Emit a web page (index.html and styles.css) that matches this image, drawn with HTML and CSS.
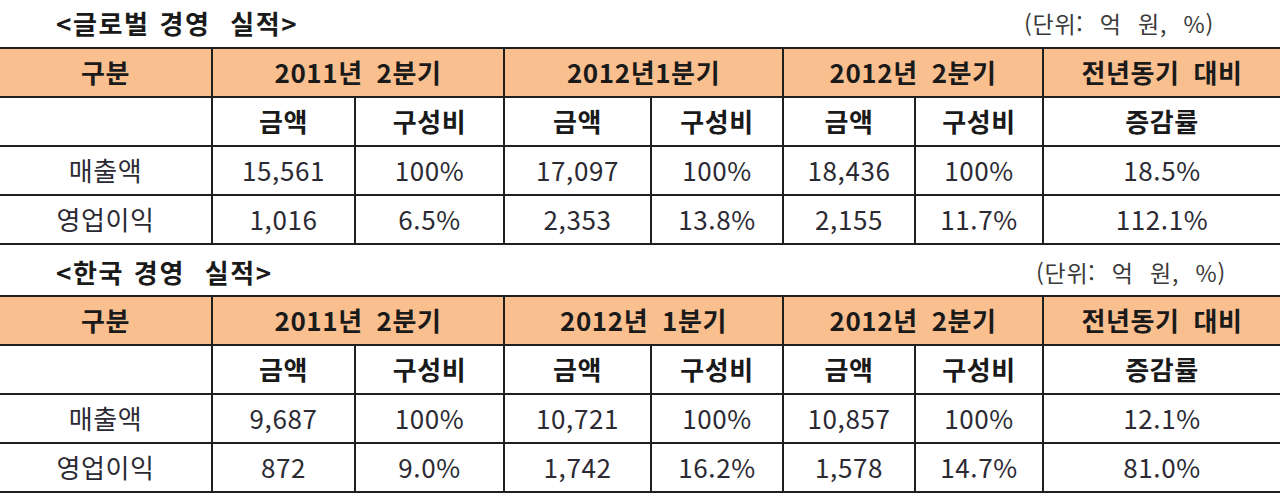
FILE: index.html
```html
<!DOCTYPE html>
<html lang="ko">
<head>
<meta charset="utf-8">
<link rel="stylesheet" href="styles.css">
</head>
<body>
<section class="block">
  <div class="caption first">
    <span class="title">&lt;글로벌 경영&nbsp; 실적&gt;</span>
    <span class="unit">(단위: 억 원, %)</span>
  </div>
  <table class="perf">
    <colgroup>
      <col class="c0"><col class="c1"><col class="c2"><col class="c3"><col class="c4"><col class="c5"><col class="c6"><col class="c7">
    </colgroup>
    <tbody>
    <tr class="head">
      <th>구분</th><th colspan="2">2011년 2분기</th><th colspan="2">2012년1분기</th><th colspan="2">2012년 2분기</th><th>전년동기 대비</th>
    </tr>
    <tr class="sub">
      <th></th><th>금액</th><th>구성비</th><th>금액</th><th>구성비</th><th>금액</th><th>구성비</th><th>증감률</th>
    </tr>
    <tr>
      <td>매출액</td><td>15,561</td><td>100%</td><td>17,097</td><td>100%</td><td>18,436</td><td>100%</td><td>18.5%</td>
    </tr>
    <tr>
      <td>영업이익</td><td>1,016</td><td>6.5%</td><td>2,353</td><td>13.8%</td><td>2,155</td><td>11.7%</td><td>112.1%</td>
    </tr>
    </tbody>
  </table>
</section>
<section class="block">
  <div class="caption second">
    <span class="title">&lt;한국 경영&nbsp; 실적&gt;</span>
    <span class="unit">(단위: 억 원, %)</span>
  </div>
  <table class="perf">
    <colgroup>
      <col class="c0"><col class="c1"><col class="c2"><col class="c3"><col class="c4"><col class="c5"><col class="c6"><col class="c7">
    </colgroup>
    <tbody>
    <tr class="head">
      <th>구분</th><th colspan="2">2011년 2분기</th><th colspan="2">2012년 1분기</th><th colspan="2">2012년 2분기</th><th>전년동기 대비</th>
    </tr>
    <tr class="sub">
      <th></th><th>금액</th><th>구성비</th><th>금액</th><th>구성비</th><th>금액</th><th>구성비</th><th>증감률</th>
    </tr>
    <tr>
      <td>매출액</td><td>9,687</td><td>100%</td><td>10,721</td><td>100%</td><td>10,857</td><td>100%</td><td>12.1%</td>
    </tr>
    <tr>
      <td>영업이익</td><td>872</td><td>9.0%</td><td>1,742</td><td>16.2%</td><td>1,578</td><td>14.7%</td><td>81.0%</td>
    </tr>
    </tbody>
  </table>
</section>
</body>
</html>
```

FILE: styles.css
```css
html, body {
  margin: 0;
  padding: 0;
  background: #ffffff;
}
body {
  width: 1280px;
  height: 496px;
  overflow: hidden;
  font-family: "Noto Sans CJK KR", "Noto Sans", sans-serif;
  color: #222;
}
.caption {
  height: 47px;
  display: flex;
  align-items: center;
  justify-content: space-between;
  padding: 0 66px 2px 56px;
  box-sizing: border-box;
}
.caption.second {
  height: 50px;
  padding-top: 3px;
  padding-bottom: 0;
  padding-right: 54px;
}
.title {
  font-size: 26px;
  font-weight: 700;
  color: #1a1a1a;
  letter-spacing: 1.6px;
  word-spacing: 1px;
}
.unit {
  font-size: 23px;
  color: #3a3a3a;
  letter-spacing: 0.8px;
  word-spacing: 9px;
}
.perf {
  border-collapse: separate;
  border-spacing: 0;
  table-layout: fixed;
  width: 1280px;
  border-top: 2px solid #1f1f1f;
}
.c0 { width: 213px; }
.c1 { width: 143px; }
.c2 { width: 149px; }
.c3 { width: 147px; }
.c4 { width: 132px; }
.c5 { width: 132px; }
.c6 { width: 128px; }
.c7 { width: 236px; }
.perf th,
.perf td {
  border-right: 2px solid #1f1f1f;
  border-bottom: 2px solid #1f1f1f;
  height: 49px;
  padding: 0 0 2px 0;
  text-align: center;
  font-size: 26px;
  line-height: 1;
  letter-spacing: 0.6px;
  box-sizing: border-box;
  white-space: nowrap;
}
.perf tr > :last-child {
  border-right: none;
}
.perf th {
  font-weight: 700;
  color: #1a1a1a;
  word-spacing: 6px;
}
.perf .head th {
  background: #fabf8f;
}
.perf td {
  font-weight: 400;
  color: #2b2a33;
}
```
